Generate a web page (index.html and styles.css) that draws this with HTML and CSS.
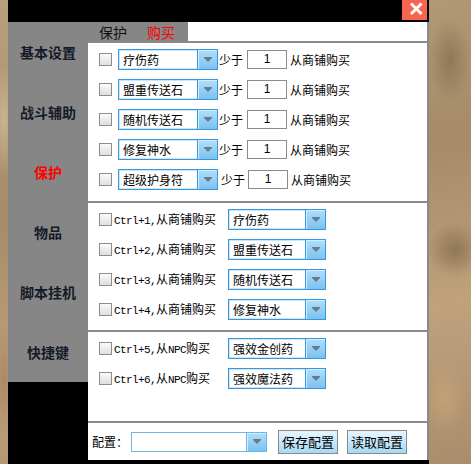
FILE: index.html
```html
<!DOCTYPE html>
<html lang="zh">
<head>
<meta charset="utf-8">
<title>保护 - 购买</title>
<link rel="stylesheet" href="styles.css">
</head>
<body>
<div class="window">
  <div class="titlebar">
    <div class="close">
      <svg width="25" height="20" viewBox="0 0 25 20"><path d="M9 3.5 L19.5 14 M19.5 3.5 L9 14" stroke="#fff" stroke-width="3" fill="none"/></svg>
    </div>
  </div>
  <div class="body">
    <div class="side-col">
      <nav class="sidebar">
        <div class="nav-item">基本设置</div>
        <div class="nav-item">战斗辅助</div>
        <div class="nav-item active">保护</div>
        <div class="nav-item">物品</div>
        <div class="nav-item">脚本挂机</div>
        <div class="nav-item">快捷键</div>
      </nav>
    </div>
    <div class="main">
      <div class="tabs">
        <div class="tab-group">
          <span class="tab">保护</span>
          <span class="tab active">购买</span>
        </div>
      </div>

      <section class="sec sec1">
        <div class="row">
          <span class="check"></span>
          <div class="combo w100"><span class="combo-text">疗伤药</span><span class="combo-btn"><i class="arrow"></i></span></div>
          <span class="lbl less">少于</span>
          <span class="num">1</span>
          <span class="lbl buy">从商铺购买</span>
        </div>
        <div class="row">
          <span class="check"></span>
          <div class="combo w100"><span class="combo-text">盟重传送石</span><span class="combo-btn"><i class="arrow"></i></span></div>
          <span class="lbl less">少于</span>
          <span class="num">1</span>
          <span class="lbl buy">从商铺购买</span>
        </div>
        <div class="row">
          <span class="check"></span>
          <div class="combo w100"><span class="combo-text">随机传送石</span><span class="combo-btn"><i class="arrow"></i></span></div>
          <span class="lbl less">少于</span>
          <span class="num">1</span>
          <span class="lbl buy">从商铺购买</span>
        </div>
        <div class="row">
          <span class="check"></span>
          <div class="combo w100"><span class="combo-text">修复神水</span><span class="combo-btn"><i class="arrow"></i></span></div>
          <span class="lbl less">少于</span>
          <span class="num">1</span>
          <span class="lbl buy">从商铺购买</span>
        </div>
        <div class="row">
          <span class="check"></span>
          <div class="combo w100"><span class="combo-text">超级护身符</span><span class="combo-btn"><i class="arrow"></i></span></div>
          <span class="lbl less shift">少于</span>
          <span class="num">1</span>
          <span class="lbl buy">从商铺购买</span>
        </div>
      </section>

      <section class="sec sec2">
        <div class="row">
          <span class="check"></span>
          <span class="hk"><span class="mono">Ctrl+1,</span>从商铺购买</span>
          <div class="combo w98"><span class="combo-text">疗伤药</span><span class="combo-btn"><i class="arrow"></i></span></div>
        </div>
        <div class="row">
          <span class="check"></span>
          <span class="hk"><span class="mono">Ctrl+2,</span>从商铺购买</span>
          <div class="combo w98"><span class="combo-text">盟重传送石</span><span class="combo-btn"><i class="arrow"></i></span></div>
        </div>
        <div class="row">
          <span class="check"></span>
          <span class="hk"><span class="mono">Ctrl+3,</span>从商铺购买</span>
          <div class="combo w98"><span class="combo-text">随机传送石</span><span class="combo-btn"><i class="arrow"></i></span></div>
        </div>
        <div class="row">
          <span class="check"></span>
          <span class="hk"><span class="mono">Ctrl+4,</span>从商铺购买</span>
          <div class="combo w98"><span class="combo-text">修复神水</span><span class="combo-btn"><i class="arrow"></i></span></div>
        </div>
      </section>

      <section class="sec sec3">
        <div class="row">
          <span class="check"></span>
          <span class="hk"><span class="mono">Ctrl+5,</span>从<span class="mono">NPC</span>购买</span>
          <div class="combo w98"><span class="combo-text">强效金创药</span><span class="combo-btn"><i class="arrow"></i></span></div>
        </div>
        <div class="row">
          <span class="check"></span>
          <span class="hk"><span class="mono">Ctrl+6,</span>从<span class="mono">NPC</span>购买</span>
          <div class="combo w98"><span class="combo-text">强效魔法药</span><span class="combo-btn"><i class="arrow"></i></span></div>
        </div>
      </section>

      <footer class="config">
        <span class="lbl cfg-lbl">配置：</span>
        <div class="combo cfg-combo"><span class="combo-text"></span><span class="combo-btn"><i class="arrow"></i></span></div>
        <button class="btn">保存配置</button>
        <button class="btn">读取配置</button>
      </footer>
    </div>
  </div>
</div>
</body>
</html>
```

FILE: styles.css
```css
html, body {
  margin: 0;
  padding: 0;
}
body {
  width: 471px;
  height: 464px;
  overflow: hidden;
  font-family: "Noto Sans CJK SC", "Noto Sans", sans-serif;
  font-size: 12px;
  color: #000;
  background-color: #b19876;
  background-image:
    radial-gradient(ellipse 30px 60px at 450px 60px, rgba(90,70,45,0.35), transparent 70%),
    radial-gradient(ellipse 40px 40px at 455px 250px, rgba(70,50,30,0.35), transparent 70%),
    radial-gradient(ellipse 30px 50px at 445px 400px, rgba(210,170,120,0.5), transparent 70%),
    radial-gradient(ellipse 20px 80px at 4px 120px, rgba(220,200,165,0.6), transparent 70%),
    radial-gradient(ellipse 20px 80px at 4px 380px, rgba(150,110,75,0.5), transparent 70%),
    linear-gradient(170deg, #b8a07c 0%, #a58b68 40%, #bfa27c 70%, #a88e6c 100%);
}

.window {
  margin-left: 8px;
  width: 421px;
  height: 464px;
  background: #000;
  display: flex;
  flex-direction: column;
}

.titlebar {
  height: 22px;
  flex: none;
  display: flex;
  justify-content: flex-end;
  align-items: flex-start;
  padding-right: 2px;
}
.close {
  width: 25px;
  height: 20px;
  background: #f7644f;
}
.close svg {
  display: block;
}

.body {
  display: flex;
  flex: 1;
  min-height: 0;
}

.side-col {
  width: 80px;
  flex: none;
}
.sidebar {
  height: 360px;
  background: #868686;
  display: flex;
  flex-direction: column;
}
.nav-item {
  height: 60px;
  display: flex;
  justify-content: center;
  padding-top: 22px;
  box-sizing: border-box;
  font-size: 14px;
  font-weight: bold;
  line-height: 16px;
  color: #141a28;
}
.nav-item.active {
  color: #ff0000;
}

.main {
  width: 341px;
  height: 438px;
  flex: none;
  box-sizing: border-box;
  background: #fff;
  border-right: 2px solid #8a8a8a;
  display: flex;
  flex-direction: column;
}

.tabs {
  height: 19px;
  flex: none;
  border-bottom: 2px solid #8a8a8a;
  display: flex;
}
.tab-group {
  width: 100px;
  background: #868686;
  display: flex;
  gap: 20px;
  padding-left: 11px;
  box-sizing: border-box;
  align-items: center;
}
.tab {
  font-size: 14px;
  line-height: 16px;
  color: #111;
}
.tab.active {
  color: #ff0000;
}

.sec {
  flex: none;
  box-sizing: border-box;
  border-bottom: 2px solid #8a8a8a;
  padding: 6px 0 0 11px;
  display: flex;
  flex-direction: column;
  gap: 9px;
}
.sec1 { height: 160px; }
.sec2 { height: 129px; }
.sec3 { height: 91px; }

.row {
  height: 21px;
  display: flex;
  align-items: center;
}

.check {
  width: 13px;
  height: 13px;
  box-sizing: border-box;
  border: 1px solid #8d8d8d;
  background: linear-gradient(#fbfbfb, #dedede);
  flex: none;
  margin-right: 6px;
}
.sec2 .check, .sec3 .check {
  margin-right: 2px;
}

.combo {
  height: 21px;
  box-sizing: border-box;
  border: 1px solid #3a97dc;
  box-shadow: inset 0 0 0 1px #c6e6fa;
  background: #fff;
  display: flex;
  flex: none;
}
.w100 { width: 100px; }
.w98 { width: 98px; }
.combo-text {
  flex: 1;
  padding-left: 4px;
  line-height: 19px;
  font-size: 12px;
  white-space: nowrap;
  overflow: hidden;
}
.combo-btn {
  width: 19px;
  border-left: 1px solid #3a97dc;
  box-shadow: inset 1px 1px 0 #d2eefe;
  background: linear-gradient(#afdffc, #7bc2f0);
  display: flex;
  align-items: center;
  justify-content: center;
}
.arrow {
  width: 0;
  height: 0;
  border-left: 4px solid transparent;
  border-right: 4px solid transparent;
  border-top: 4px solid #6b7b8c;
  box-shadow: 0 -1px 0 #6b7b8c;
}

.lbl {
  font-size: 12px;
  line-height: 16px;
  white-space: nowrap;
}
.less {
  margin-left: 1px;
  margin-right: 4px;
}
.less.shift {
  margin-left: 3px;
  margin-right: 3px;
}
.num {
  width: 40px;
  height: 19px;
  box-sizing: border-box;
  border: 1px solid #8c8c8c;
  text-align: center;
  font-family: "Liberation Sans", sans-serif;
  font-size: 12px;
  line-height: 17px;
  flex: none;
}
.buy {
  margin-left: 3px;
}

.hk {
  width: 114px;
  flex: none;
  font-size: 12px;
  line-height: 16px;
  white-space: nowrap;
}
.mono {
  font-family: "Liberation Mono", monospace;
  font-size: 11px;
  letter-spacing: -0.6px;
}

.config {
  flex: 1;
  display: flex;
  align-items: center;
  padding: 0 0 0 4px;
  box-sizing: border-box;
}
.cfg-lbl {
  width: 39px;
  flex: none;
}
.cfg-combo {
  width: 136px;
  height: 20px;
  border-color: #6fb6e8;
  box-shadow: none;
  margin-right: 11px;
}
.cfg-combo .combo-btn {
  border-left-color: #6fb6e8;
}
.btn {
  width: 60px;
  height: 24px;
  box-sizing: border-box;
  border: 1px solid #8a8a8a;
  background: linear-gradient(#e8f6fe, #a6d8f6);
  font-family: "Noto Sans CJK SC", sans-serif;
  font-size: 13px;
  line-height: 20px;
  padding: 0;
  color: #000;
  margin-right: 9px;
  flex: none;
}
```
